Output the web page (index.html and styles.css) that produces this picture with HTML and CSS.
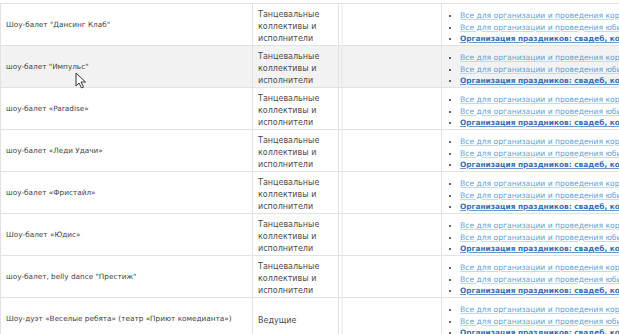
FILE: index.html
```html
<!DOCTYPE html>
<html>
<head>
<meta charset="utf-8">
<link rel="stylesheet" href="styles.css">
</head>
<body>
<div class="wrap">
<table class="grid">
<colgroup><col class="c1"><col class="c2"><col class="c3"><col class="c4"></colgroup>
<tbody>
<tr><td class="name">Шоу-балет "Дансинг Клаб"</td><td class="cat">Танцевальные коллективы и исполнители</td><td class="sep"></td><td class="links"><ul><li><a href="#">Все для организации и проведения корпоративов</a></li><li><a href="#">Все для организации и проведения юбилеев</a></li><li><a class="b" href="#">Организация праздников: свадеб, корпоративов</a></li></ul></td></tr>
<tr class="hover"><td class="name">шоу-балет "Импульс"</td><td class="cat">Танцевальные коллективы и исполнители</td><td class="sep"></td><td class="links"><ul><li><a href="#">Все для организации и проведения корпоративов</a></li><li><a href="#">Все для организации и проведения юбилеев</a></li><li><a class="b" href="#">Организация праздников: свадеб, корпоративов</a></li></ul></td></tr>
<tr><td class="name">шоу-балет «Paradise»</td><td class="cat">Танцевальные коллективы и исполнители</td><td class="sep"></td><td class="links"><ul><li><a href="#">Все для организации и проведения корпоративов</a></li><li><a href="#">Все для организации и проведения юбилеев</a></li><li><a class="b" href="#">Организация праздников: свадеб, корпоративов</a></li></ul></td></tr>
<tr><td class="name">шоу-балет «Леди Удачи»</td><td class="cat">Танцевальные коллективы и исполнители</td><td class="sep"></td><td class="links"><ul><li><a href="#">Все для организации и проведения корпоративов</a></li><li><a href="#">Все для организации и проведения юбилеев</a></li><li><a class="b" href="#">Организация праздников: свадеб, корпоративов</a></li></ul></td></tr>
<tr><td class="name">шоу-балет «Фристайл»</td><td class="cat">Танцевальные коллективы и исполнители</td><td class="sep"></td><td class="links"><ul><li><a href="#">Все для организации и проведения корпоративов</a></li><li><a href="#">Все для организации и проведения юбилеев</a></li><li><a class="b" href="#">Организация праздников: свадеб, корпоративов</a></li></ul></td></tr>
<tr><td class="name">Шоу-балет «Юдис»</td><td class="cat">Танцевальные коллективы и исполнители</td><td class="sep"></td><td class="links"><ul><li><a href="#">Все для организации и проведения корпоративов</a></li><li><a href="#">Все для организации и проведения юбилеев</a></li><li><a class="b" href="#">Организация праздников: свадеб, корпоративов</a></li></ul></td></tr>
<tr><td class="name">шоу-балет, belly dance "Престиж"</td><td class="cat">Танцевальные коллективы и исполнители</td><td class="sep"></td><td class="links"><ul><li><a href="#">Все для организации и проведения корпоративов</a></li><li><a href="#">Все для организации и проведения юбилеев</a></li><li><a class="b" href="#">Организация праздников: свадеб, корпоративов</a></li></ul></td></tr>
<tr><td class="name">Шоу-дуэт «Веселые ребята» (театр «Приют комедианта»)</td><td class="cat">Ведущие</td><td class="sep"></td><td class="links"><ul><li><a href="#">Все для организации и проведения корпоративов</a></li><li><a href="#">Все для организации и проведения юбилеев</a></li><li><a class="b" href="#">Организация праздников: свадеб, корпоративов</a></li></ul></td></tr>
</tbody>
</table>
<svg class="cursor" width="12" height="17" viewBox="0 0 12 17"><path d="M1 1 L1 14 L4 11 L6.5 16 L8.5 15 L6 10 L10.5 10 Z" fill="#fff" stroke="#333" stroke-width="1"/></svg>
</div>
</body>
</html>
```
FILE: styles.css
```css
html, body { margin: 0; padding: 0; background: #fff; overflow: hidden; }
.wrap { position: relative; width: 619px; height: 334px; overflow: hidden; padding-top: 3px; box-sizing: border-box; }
.grid { border-collapse: collapse; table-layout: fixed; width: 760px; font-family: "DejaVu Sans", Verdana, sans-serif; font-size: 8px; color: #4a4a4a; }
.c1 { width: 252px; }
.c2 { width: 86px; }
.c3 { width: 103px; }
.c4 { width: 319px; }
.grid td { border: 1px solid #e2e2e2; vertical-align: middle; height: 42px; padding: 0; box-sizing: border-box; }
.grid tr.hover td { background-color: #f2f2f2; }
.grid td.name { padding-left: 5px; font-size: 7.3px; white-space: nowrap; color: #444; }
.grid td.cat { padding: 5px 5px 0; line-height: 12px; }
.grid td.sep { background-image: linear-gradient(to right, transparent 2px, #e6e6e6 2px, #e6e6e6 3px, transparent 3px); }
.grid td.links { padding: 6px 0 0; vertical-align: top; }
.links ul { margin: 0; padding: 0 0 0 18px; list-style: disc; color: #333; }
.links li { line-height: 11.5px; height: 11.5px; white-space: nowrap; font-size: 7.6px; }
.links a { color: #649fd9; text-decoration: underline; text-decoration-color: #c2d9f0; }
.links a.b { color: #3a6fae; font-weight: bold; font-size: 7.4px; text-decoration-color: #6f98c8; }
.cursor { position: absolute; left: 75px; top: 72px; }
```
